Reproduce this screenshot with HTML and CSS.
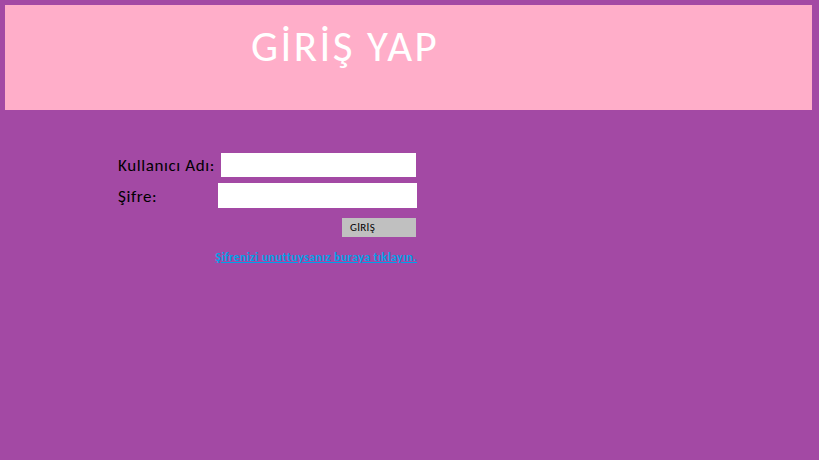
FILE: index.html
```html
<!DOCTYPE html>
<html lang="tr">
<head>
<meta charset="utf-8">
<title>Giriş Yap</title>
<link rel="stylesheet" href="styles.css">
</head>
<body>
<header class="banner">
  <h1 class="banner-title">GİRİŞ YAP</h1>
</header>
<main class="login">
  <div class="row">
    <label class="label" for="user">Kullanıcı Adı:</label>
    <input class="field field-user" id="user" type="text">
  </div>
  <div class="row">
    <label class="label" for="pass">Şifre:</label>
    <input class="field field-pass" id="pass" type="password">
  </div>
  <div class="actions">
    <button class="btn" type="button">GİRİŞ</button>
  </div>
  <div class="forgot">
    <a class="forgot-link" href="#">Şifrenizi unuttuysanız buraya tıklayın.</a>
  </div>
</main>
</body>
</html>
```
FILE: styles.css
```css
html, body {
  margin: 0;
  padding: 0;
}
body {
  background: #A349A4;
  font-family: Carlito, "Open Sans", "DejaVu Sans", sans-serif;
  width: 819px;
  height: 460px;
  overflow: hidden;
  padding-top: 5px;
  box-sizing: border-box;
}
.banner {
  margin: 0 7px 0 5px;
  height: 105px;
  background: #FFAEC9;
  box-sizing: border-box;
  padding: 16px 0 0 246px;
}
.banner-title {
  margin: 0;
  color: #ffffff;
  font-weight: 400;
  font-size: 43px;
  line-height: 52px;
  letter-spacing: 2.4px;
}
.login {
  margin: 43px 0 0 118px;
  width: 299px;
  display: flex;
  flex-direction: column;
}
.row {
  display: flex;
  align-items: center;
  justify-content: space-between;
}
.row + .row {
  margin-top: 6px;
}
.label {
  color: #000000;
  font-size: 17px;
  line-height: 20px;
  letter-spacing: 0.6px;
  padding-top: 2px;
}
.field {
  border: none;
  outline: none;
  background: #ffffff;
  padding: 0;
  margin: 0;
  box-sizing: border-box;
}
.field-user {
  width: 195px;
  height: 24px;
  margin-right: 1px;
}
.field-pass {
  width: 199px;
  height: 25px;
}
.actions {
  display: flex;
  justify-content: flex-end;
  margin-top: 10px;
  padding-right: 1px;
}
.btn {
  width: 74px;
  height: 19px;
  margin: 0;
  border: none;
  background: #C0C0C0;
  color: #000000;
  font-family: inherit;
  font-size: 11px;
  letter-spacing: 0.3px;
  text-align: left;
  padding: 0 0 0 8px;
}
.forgot {
  display: flex;
  justify-content: flex-end;
  margin-top: 13px;
}
.forgot-link {
  color: #00A2E8;
  font-size: 12px;
  font-weight: 700;
  line-height: 15px;
  letter-spacing: 0.4px;
  text-decoration: underline;
}
```
